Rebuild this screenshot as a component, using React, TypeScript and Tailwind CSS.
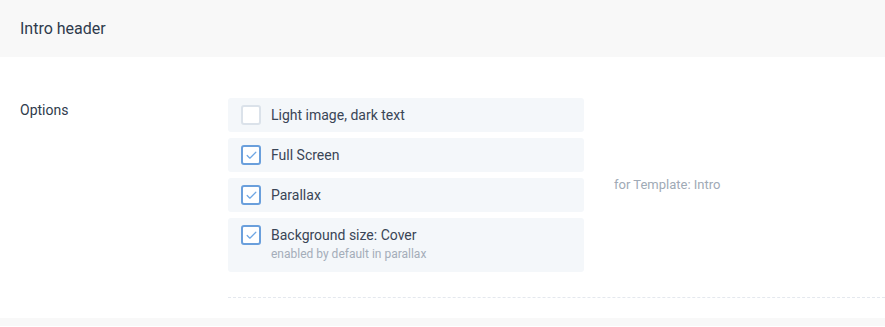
import { Check } from "lucide-react";

const options = [
  { label: "Light image, dark text", checked: false },
  { label: "Full Screen", checked: true },
  { label: "Parallax", checked: true },
  { label: "Background size: Cover", checked: true, hint: "enabled by default in parallax" },
];

function Box({ checked }: { checked: boolean }) {
  return (
    <span
      className={
        checked
          ? "flex h-5 w-5 shrink-0 items-center justify-center rounded-[3px] border-2 border-[#6a9fdc] bg-white"
          : "flex h-5 w-5 shrink-0 items-center justify-center rounded-[3px] border-2 border-[#dbe2ea] bg-white"
      }
    >
      {checked && <Check className="h-[13px] w-[13px] text-[#6ea6e4]" strokeWidth={2.25} />}
    </span>
  );
}

export default function App() {
  return (
    <div className="w-[885px] bg-[#f8f8f8] font-['Roboto',sans-serif]">
      {/* header */}
      <div className="flex h-[57px] items-center px-5 text-[16px] text-[#2f3b4c]">Intro header</div>

      {/* options section */}
      <div className="bg-white pt-[41px] pb-5">
        <div className="flex">
          <div className="w-[228px] shrink-0 pl-5 pt-[2px] text-[14px] leading-5 text-[#2f3b4c]">Options</div>
          <div className="flex flex-col gap-[6px]">
            {options.map((o) => (
              <div key={o.label} className="flex w-[356px] gap-[10px] rounded-[3px] bg-[#f4f7fa] px-[13px] py-[7px]">
                <Box checked={o.checked} />
                <div className="flex flex-col">
                  <span className="text-[14px] leading-5 text-[#3a4556]">{o.label}</span>
                  {o.hint && <span className="pb-1 pt-[2px] text-[12px] leading-[14px] text-[#a4adb9]">{o.hint}</span>}
                </div>
              </div>
            ))}
          </div>
          <div className="flex items-center pl-[30px] text-[13px] text-[#a0aab6]">for Template: Intro</div>
        </div>
        <div className="ml-[228px] mt-[25px] border-t border-dashed border-[#e4e8ee]" />
      </div>
      <div className="h-2" />
    </div>
  );
}
